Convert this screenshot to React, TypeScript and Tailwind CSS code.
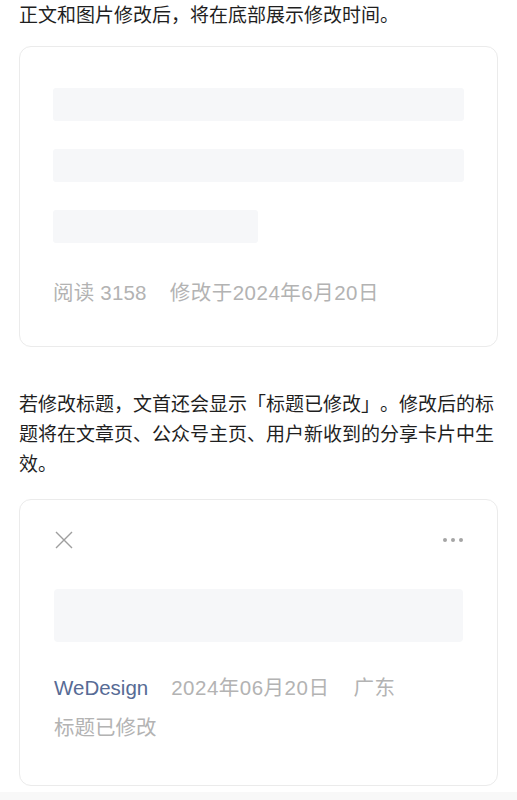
export default function App() {
  return (
    <div className="min-h-[800px] bg-white pt-[1px] font-['Liberation_Sans','Noto_Sans_CJK_SC',sans-serif] text-[#1f1f1f] [text-spacing-trim:space-all]">
      <div className="px-[19px]">
        <p className="text-[19px] leading-[30px]">正文和图片修改后，将在底部展示修改时间。</p>

        <section className="mt-[15px] rounded-[12px] border border-[#ebebeb] px-[33px] pb-[38px] pt-[41px]">
          <div className="flex flex-col gap-[28px]">
            <div className="h-[33px] rounded-[3px] bg-[#f6f7f9]" />
            <div className="h-[33px] rounded-[3px] bg-[#f6f7f9]" />
            <div className="h-[33px] w-[205px] rounded-[3px] bg-[#f6f7f9]" />
          </div>
          <div className="mt-[35px] flex gap-[23px] text-[20.5px] leading-[30px] text-[#b3b3b3]">
            <span className="tracking-[0.2px]">阅读 3158</span>
            <span className="tracking-[0.5px]">修改于2024年6月20日</span>
          </div>
        </section>

        <p className="mt-[43px] text-[19px] leading-[30px]">
          若修改标题，文首还会显示「标题已修改」。修改后的标题将在文章页、公众号主页、用户新收到的分享卡片中生效。
        </p>

        <section className="mt-[19px] rounded-[12px] border border-[#ebebeb] px-[34px] pb-[42px] pt-[28px]">
          <div className="flex h-[24px] items-center justify-between">
            <svg width="18" height="18" viewBox="0 0 18 18" className="ml-[1px]">
              <path d="M1 1L17 17M17 1L1 17" stroke="#9e9e9e" strokeWidth="1.4" fill="none" />
            </svg>
            <div className="flex items-center gap-[4px]">
              <span className="h-[4px] w-[4px] rounded-full bg-[#a5a5a5]" />
              <span className="h-[4px] w-[4px] rounded-full bg-[#a5a5a5]" />
              <span className="h-[4px] w-[4px] rounded-full bg-[#a5a5a5]" />
            </div>
          </div>
          <div className="mt-[37px] h-[53px] rounded-[4px] bg-[#f6f7f9]" />
          <div className="mt-[31px] flex text-[20.5px] leading-[30px]">
            <span className="text-[#576b95]">WeDesign</span>
            <span className="ml-[23px] tracking-[0.5px] text-[#b3b3b3]">2024年06月20日</span>
            <span className="ml-[24px] tracking-[0.5px] text-[#b3b3b3]">广东</span>
          </div>
          <p className="mt-[10px] text-[20.5px] leading-[30px] text-[#b3b3b3]">标题已修改</p>
        </section>
      </div>
      <div className="mt-[6px] h-[10px] bg-[#f8f8f8]" />
    </div>
  );
}
